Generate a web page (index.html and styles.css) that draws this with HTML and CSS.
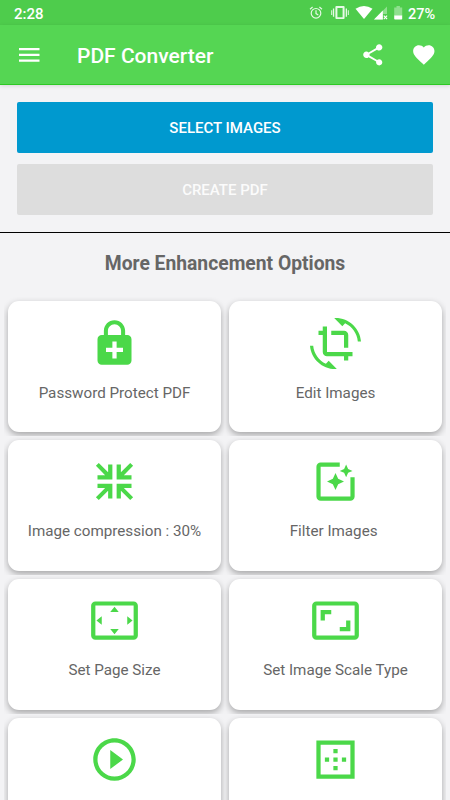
FILE: index.html
```html
<!DOCTYPE html>
<html lang="en">
<head>
<meta charset="utf-8">
<title>PDF Converter</title>
<link rel="stylesheet" href="styles.css">
</head>
<body>
<div class="screen">
  <div class="status">
    <span class="clock">2:28</span>
    <svg class="status-icons" viewBox="0 0 96 16" width="96" height="16">
      <g fill="none" stroke="#e6f9e6" stroke-width="1.2">
        <circle cx="7" cy="8.3" r="4.8"/>
        <path d="M7 5.3v3.3l2.3 1.5M1 4.2 3.6 2M13 4.2 10.4 2"/>
      </g>
      <g fill="#e6f9e6">
        <path fill-rule="evenodd" d="M27.4 1h7.2q1 0 1 1v11q0 1-1 1h-7.2q-1 0-1-1V2q0-1 1-1zM28.4 3v9.2h5.2V3z"/>
        <path d="M23.9 3.5h1.3v8.3h-1.3zM36.7 3.5H38v8.3h-1.3zM22.2 5.3h1v4.8h-1zM38.8 5.3h1v4.8h-1z"/>
      </g>
      <path fill="#fff" d="M46.500 3.700Q55 -1.700 63.500 3.700L55 14z"/>
      <path fill="#8fe08e" d="M78 1.500V9h-4v5.500H65z"/>
      <path fill="#fff" d="M73.800 5.600V14.500H65z"/>
      <path stroke="#fff" stroke-width="1.100" d="m74.800 10.600 3.300 3.500m0-3.500-3.300 3.500"/>
      <path fill="#8fe08e" d="M87.500 1h3.400v1.400h2.300v8.600h-8V2.400h2.300z"/>
      <path fill="#fff" d="M85.200 10.600h8v3.200q0 .8-.8.800H86q-.8 0-.8-.8z"/>
    </svg>
    <span class="battery">27%</span>
  </div>
  <header class="appbar">
    <svg class="menu" viewBox="0 0 21 14" width="21" height="14"><path fill="#fff" d="M0 0h20.500v2.200H0zM0 5.800h20.500V8H0zM0 11.500h20.500v2.200H0z"/></svg>
    <h1 class="title">PDF Converter</h1>
    <svg class="action" viewBox="0 0 24 24"><path d="M18 16.080c-.76 0-1.440.3-1.960.77L8.910 12.700c.05-.23.09-.46.09-.7s-.04-.47-.09-.7l7.050-4.110c.54.5 1.250.81 2.040.81 1.660 0 3-1.340 3-3s-1.340-3-3-3-3 1.340-3 3c0 .24.04.47.09.7L8.040 9.810C7.500 9.310 6.790 9 6 9c-1.660 0-3 1.340-3 3s1.340 3 3 3c.79 0 1.500-.31 2.040-.81l7.120 4.160c-.05.21-.08.43-.08.65 0 1.610 1.310 2.920 2.920 2.920 1.610 0 2.920-1.310 2.920-2.920s-1.310-2.920-2.920-2.920z"/></svg>
    <svg class="action" viewBox="0 0 24 24"><path d="M12 21.350l-1.450-1.320C5.400 15.360 2 12.280 2 8.500 2 5.420 4.420 3 7.500 3c1.740 0 3.410.81 4.500 2.090C13.090 3.810 14.760 3 16.500 3 19.580 3 22 5.420 22 8.500c0 3.780-3.400 6.860-8.550 11.540L12 21.350z"/></svg>
  </header>
  <section class="actions">
    <button class="btn primary">SELECT IMAGES</button>
    <button class="btn disabled" disabled>CREATE PDF</button>
  </section>
  <h2 class="heading">More Enhancement Options</h2>
  <main class="grid">
    <div class="cell"><div class="card">
      <svg class="icon" viewBox="0 0 24 24"><path d="M18 8h-1V6c0-2.760-2.240-5-5-5S7 3.240 7 6v2H6c-1.100 0-2 .9-2 2v10c0 1.100.9 2 2 2h12c1.100 0 2-.9 2-2V10c0-1.100-.9-2-2-2zM8.900 6c0-1.710 1.390-3.100 3.100-3.100s3.100 1.390 3.100 3.100v2H8.900V6zM16 16h-3v3h-2v-3H8v-2h3v-3h2v3h3v2z"/></svg>
      <span class="label">Password Protect PDF</span>
    </div></div>
    <div class="cell"><div class="card">
      <svg class="icon" viewBox="0 0 24 24"><path d="M7.470 21.490C4.200 19.930 1.860 16.760 1.500 13H0c.51 6.160 5.660 11 11.950 11 .23 0 .44-.02.66-.03L8.800 20.150l-1.330 1.340zM12.050 0c-.23 0-.44.02-.66.04l3.810 3.810 1.330-1.330C19.800 4.070 22.140 7.240 22.500 11H24c-.51-6.160-5.660-11-11.950-11zM16 14h2V8c0-1.110-.9-2-2-2h-6v2h6v6zm-8 2V4H6v2H4v2h2v8c0 1.100.89 2 2 2h8v2h2v-2h2v-2H8z"/></svg>
      <span class="label">Edit Images</span>
    </div></div>
    <div class="cell"><div class="card">
      <svg class="icon" viewBox="0 0 24 24"><path d="M11 4H9v3.600L4.600 3.240 3.240 4.600 7.600 9H4v2h7zM13 4h2v3.600l4.400-4.360 1.360 1.360L16.400 9H20v2h-7zM11 20H9v-3.600l-4.400 4.360-1.360-1.360L7.600 15H4v-2h7zM13 20h2v-3.600l4.400 4.360 1.360-1.360L16.400 15H20v-2h-7z"/></svg>
      <span class="label">Image compression : 30%</span>
    </div></div>
    <div class="cell"><div class="card">
      <svg class="icon" viewBox="0 0 24 24"><path d="M19.020 10v9H5V5h9V3H5.020c-1.100 0-2 .9-2 2v14c0 1.100.9 2 2 2H19c1.100 0 2-.9 2-2v-9h-1.980zM17 10l.94-2.060L20 7l-2.060-.94L17 4l-.94 2.060L14 7l2.060.94zM13.250 10.750L12 8l-1.250 2.750L8 12l2.750 1.250L12 16l1.250-2.750L16 12z"/></svg>
      <span class="label">Filter Images&nbsp;</span>
    </div></div>
    <div class="cell"><div class="card">
      <svg class="icon" viewBox="0 0 24 24"><path d="M12.010 5.500L10 8h4l-1.990-2.500zM18 10v4l2.500-1.990L18 10zM6 10l-2.500 2.010L6 14v-4zm8 6h-4l2.010 2.500L14 16zm7-13H3c-1.100 0-2 .9-2 2v14c0 1.100.9 2 2 2h18c1.100 0 2-.9 2-2V5c0-1.100-.9-2-2-2zm0 16.010H3V4.990h18v14.020z"/></svg>
      <span class="label">Set Page Size</span>
    </div></div>
    <div class="cell"><div class="card">
      <svg class="icon" viewBox="0 0 24 24"><path d="M19 12h-2v3h-3v2h5v-5zM7 9h3V7H5v5h2V9zm14-6H3c-1.100 0-2 .9-2 2v14c0 1.100.9 2 2 2h18c1.100 0 2-.9 2-2V5c0-1.100-.9-2-2-2zm0 16.010H3V4.990h18v14.020z"/></svg>
      <span class="label">Set Image Scale Type</span>
    </div></div>
    <div class="cell"><div class="card">
      <svg class="icon" viewBox="0 0 24 24"><path d="M10 16.500l6-4.500-6-4.500v9zM12 2C6.480 2 2 6.480 2 12s4.480 10 10 10 10-4.480 10-10S17.520 2 12 2zm0 18c-4.410 0-8-3.590-8-8s3.590-8 8-8 8 3.590 8 8-3.590 8-8 8z"/></svg>
    </div></div>
    <div class="cell"><div class="card">
      <svg class="icon" viewBox="0 0 24 24"><path d="M13 7h-2v2h2V7zm0 4h-2v2h2v-2zm4 0h-2v2h2v-2zM3 3v18h18V3H3zm16 16H5V5h14v14zm-6-4h-2v2h2v-2zm-4-4H7v2h2v-2z"/></svg>
    </div></div>
  </main>
</div>
</body>
</html>
```
FILE: styles.css
```css
* { box-sizing: border-box; }
body { margin: 0; background: #f3f3f5; font-family: Roboto, "Liberation Sans", sans-serif; }
.screen { width: 450px; height: 800px; overflow: hidden; display: flex; flex-direction: column; }
.status {
  flex: none; height: 25px; padding: 0 14px 0 14px; display: flex; align-items: center;
  background: #4ecc4c; color: #fff; font-size: 15px; font-weight: 500; line-height: 25px;
}
.clock { padding-top: 3px; }
.battery { width: 28px; padding-top: 3px; font-size: 14.500px; white-space: nowrap; }
.status-icons { margin: 0 3px 0 auto; }
.appbar {
  flex: none; height: 60px; padding: 0 13px 0 19px; display: flex; align-items: center;
  background: #55d653; border-bottom: 1px solid #2dc924; box-shadow: 0 1px 4px rgba(0,0,0,.12);
}
.menu { flex: none; margin-right: 37px; }
.title { flex: 1; margin: 3px 0 0; color: #fff; font-size: 21px; font-weight: 500; line-height: 28px; }
.action { flex: none; width: 25.600px; height: 25.600px; fill: #fff; }
.action + .action { margin-left: 25.400px; }
.actions {
  flex: none; height: 148px; padding: 17px 17px 0; display: flex; flex-direction: column; gap: 11px;
  border-bottom: 1px solid #000;
}
.btn {
  height: 51px; padding: 2px 0 0; border: 0; border-radius: 2px; color: #fff;
  font: 500 15px/49px Roboto, "Liberation Sans", sans-serif; text-align: center;
}
.primary { background: #0099cf; }
.disabled { background: #ddd; color: #fbfbfb; }
.heading {
  flex: none; margin: 0; height: 64.200px; padding-top: 18px; text-align: center;
  color: #666; font-size: 19.300px; font-weight: 700; line-height: 26px;
}
.grid { padding: 0 4px; display: grid; grid-template-columns: 221px 221px; grid-auto-rows: 138.800px; }
.cell { padding: 4px; overflow: hidden; }
.card {
  height: 130.800px; padding-top: 16.500px; display: flex; flex-direction: column; align-items: center;
  background: #fff; border-radius: 11px; box-shadow: 0 3px 7px rgba(0,0,0,.32);
}
.icon { width: 51px; height: 51px; fill: #4bd849; }
.label { margin-top: 13px; color: #666; font-size: 15.200px; font-weight: 400; line-height: 22px; white-space: nowrap; }
```
